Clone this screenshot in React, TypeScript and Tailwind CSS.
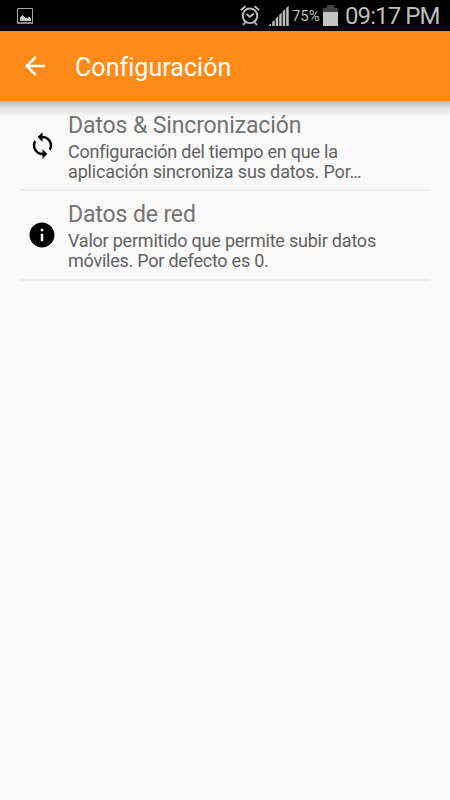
import type { ReactNode } from 'react';
import { MdArrowBack, MdInfo, MdSync } from 'react-icons/md';

interface SettingItemProps {
  icon: ReactNode;
  title: string;
  children: ReactNode;
  className: string;
}

const StatusBar = () => (
  <div className="flex h-[31px] items-center bg-black pl-[17px] text-[#bdbdbd]">
    <svg className="h-4 w-4" viewBox="0 0 16 16">
      <path d="M.5.5h15v15H.5z" fill="none" stroke="#a5a5a5" />
      <path d="M0 14h16v2H0z" fill="#858585" />
      <path d="M3 13V9h1V8h1V7h1v1h1v1h1v1h1h2V9h2v1h1v3z" fill="#c4c4c4" />
    </svg>

    {/* Alarm */}
    <svg className="ml-[207px] h-[21px] w-5" viewBox="0 0 20 21" fill="none" stroke="currentColor" strokeWidth="1.900">
      <circle cx="10" cy="10.800" r="7.300" />
      <path d="M6.500 9l3.300 2.800L14 8.500M.8 5.200L5.500 1.200M19.200 5.200L14.500 1.200M5.500 17L3 20M14.500 17l2.500 3" />
    </svg>
    {/* Signal */}
    <svg className="ml-[9px] h-5 w-5" viewBox="0 0 20 20" fill="currentColor">
      <path d="M0 20v-1l2-1.500V20zM3.200 20v-4l2.500-2v6zM6.700 20v-7.500l2.500-2V20zM10.200 20V9l2.500-2.500V20zM13.700 20V5.500l2.500-2.500v17zM17.200 20V2l2.500-2v20z" />
    </svg>
    <span className="ml-[3px] w-[29px] whitespace-nowrap pt-px text-[15px] tracking-[-0.100px]">75%</span>
    {/* Battery */}
    <svg className="ml-[2px] h-[21px] w-[15px]" viewBox="0 0 15 21">
      <path d="M4 0h7v3h4v4H0V3h4z" fill="#444" />
      <path d="M0 7h15v14H0z" fill="#c4c4c4" />
    </svg>
    <span className="ml-[7px] whitespace-nowrap text-[24px] tracking-[-0.900px]">09:17 PM</span>
  </div>
);

const Toolbar = () => (
  <header className="relative flex h-[70px] items-center bg-[#ff8a17] pl-5 text-white">
    <MdArrowBack className="h-[30px] w-[30px]" />
    <h1 className="ml-[25px] pt-[3px] text-[25px] leading-[30px] tracking-[0.050px]">Configuración</h1>
    <div className="absolute inset-x-0 top-full h-4 bg-linear-to-b from-[#bcbcbc] via-[#e4e4e4] to-[#fafafa]" />
  </header>
);

const SettingItem = ({ icon, title, children, className }: SettingItemProps) => (
  <li className={className}>
    <div className="flex h-[67px] w-[48px] shrink-0 items-center text-black">{icon}</div>
    <div className="relative whitespace-nowrap text-[#616161]">
      <h2 className="mb-[2px] text-[23px] leading-[28px] tracking-[-0.120px] text-[#737373]">{title}</h2>
      {children}
    </div>
  </li>
);

export default function App() {
  return (
    <div className="h-[800px] w-[450px] overflow-hidden bg-[#fafafa] font-['Roboto',sans-serif]">
      <StatusBar />
      <Toolbar />
      <ul className="px-5">
        <SettingItem
          className="flex h-[90px] border-b-2 border-[#eeeeee] pt-[11px]"
          icon={<MdSync className="ml-2 h-[29px] w-[29px]" />}
          title="Datos & Sincronización"
        >
          <p className="text-[18px] leading-[20px] tracking-[-0.240px]">Configuración del tiempo en que la</p>
          <p className="text-[18px] leading-[20px] tracking-[-0.150px]">aplicación sincroniza sus datos. Por…</p>
        </SettingItem>
        <SettingItem
          className="flex h-[90px] border-b-2 border-[#eeeeee] pt-[10px]"
          icon={<MdInfo className="ml-[7px] h-[30px] w-[30px]" />}
          title="Datos de red"
        >
          <p className="text-[18px] leading-[20px] tracking-[-0.220px]">Valor permitido que permite subir datos</p>
          <p className="text-[18px] leading-[20px] tracking-[-0.240px]">móviles. Por defecto es 0.</p>
        </SettingItem>
      </ul>
    </div>
  );
}
